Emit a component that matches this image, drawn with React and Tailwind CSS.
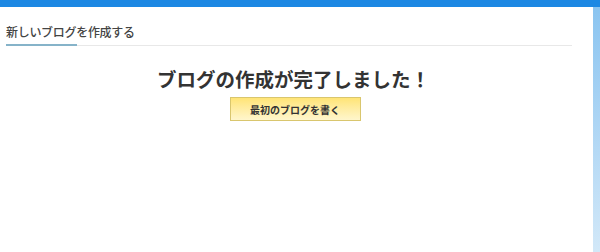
import React from "react";

const App = () => {
    return (
        <div className="w-[600px] h-[252px] flex flex-col bg-white" style={{ fontFamily: '"Noto Sans CJK JP", "Noto Sans", sans-serif' }}>
            <div className="h-[7px] bg-[#1c88e3] shrink-0"></div>
            <div className="flex flex-1">
                <div className="flex-1 bg-white pl-[6px] pr-[12px]">
                    <div className="pt-[15px]">
                        <p className="text-[12px] leading-[20px] font-medium text-[#444] tracking-[-0.3px]">新しいブログを作成する</p>
                        <div className="mt-[3px] mr-[9px] h-px bg-[#e8e8e8] relative">
                            <div className="absolute left-0 -top-px w-[71px] h-[2px] bg-[#86b3c9]"></div>
                        </div>
                    </div>
                    <div className="flex flex-col items-center">
                        <h1 className="mt-[21px] text-[19.5px] leading-[24px] font-bold text-[#333]">ブログの作成が完了しました！</h1>
                        <button className="mt-[6px] ml-[3px] w-[131px] h-[24px] border border-[#d9c66e] bg-gradient-to-b from-[#ffe475] to-[#fff6cc] text-[10px] font-semibold text-[#333]">
                            最初のブログを書く
                        </button>
                    </div>
                </div>
                <div className="w-[7px] bg-gradient-to-b from-[#8ac4f0] to-[#d2e8f8]"></div>
            </div>
        </div>
    )
}

export default App
